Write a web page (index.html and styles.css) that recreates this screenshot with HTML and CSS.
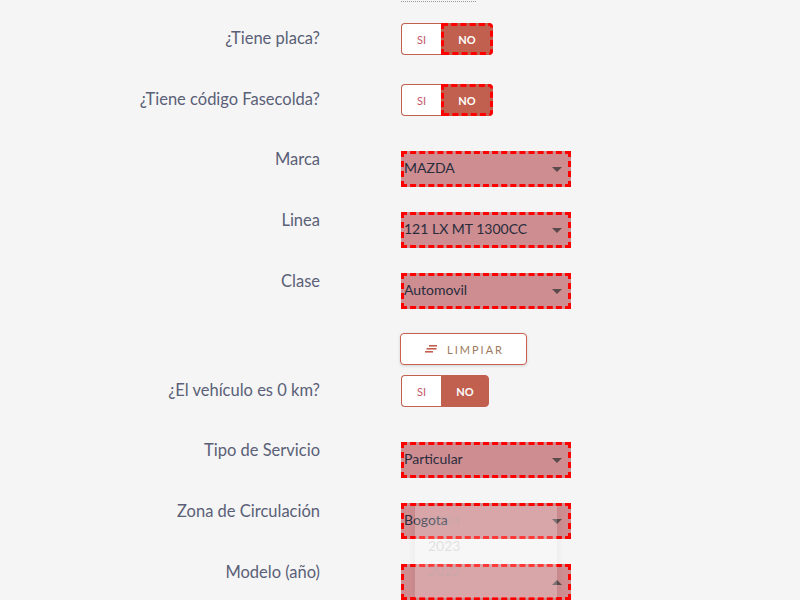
FILE: index.html
```html
<!DOCTYPE html>
<html lang="es">
<head>
<meta charset="utf-8">
<title>Formulario vehículo</title>
<link rel="stylesheet" href="styles.css">
</head>
<body>
<div class="form">
  <div class="row row-top">
    <div></div>
    <div class="dotted"></div>
  </div>

  <div class="row row-toggle">
    <label class="label">¿Tiene placa?</label>
    <div class="toggle">
      <span class="opt si">SI</span>
      <span class="opt no wide marked">NO</span>
    </div>
  </div>

  <div class="row row-toggle">
    <label class="label">¿Tiene código Fasecolda?</label>
    <div class="toggle">
      <span class="opt si">SI</span>
      <span class="opt no wide marked">NO</span>
    </div>
  </div>

  <div class="row">
    <label class="label">Marca</label>
    <div class="select"><span>MAZDA</span><i class="caret"></i></div>
  </div>

  <div class="row">
    <label class="label">Linea</label>
    <div class="select"><span>121 LX MT 1300CC</span><i class="caret"></i></div>
  </div>

  <div class="row">
    <label class="label">Clase</label>
    <div class="select"><span>Automovil</span><i class="caret"></i></div>
  </div>

  <div class="row row-btn">
    <div></div>
    <div>
      <button class="btn-clear" type="button">
        <svg class="clear-icon" width="13" height="8" viewBox="0 0 13 8">
          <rect x="4" y="0" width="8" height="1.6" fill="#c45f4e"/>
          <rect x="1.5" y="3" width="10" height="1.6" fill="#c45f4e"/>
          <rect x="0" y="6" width="8" height="1.6" fill="#c45f4e"/>
        </svg>
        <span>LIMPIAR</span>
      </button>
    </div>
  </div>

  <div class="row row-toggle">
    <label class="label">¿El vehículo es 0 km?</label>
    <div class="toggle">
      <span class="opt si">SI</span>
      <span class="opt no">NO</span>
    </div>
  </div>

  <div class="row">
    <label class="label">Tipo de Servicio</label>
    <div class="select"><span>Particular</span><i class="caret"></i></div>
  </div>

  <div class="row">
    <label class="label">Zona de Circulación</label>
    <div class="select"><span>Bogota</span><i class="caret"></i></div>
  </div>

  <div class="row">
    <label class="label">Modelo (año)</label>
    <div class="select"><span></span><i class="caret up"></i></div>
  </div>
</div>

<ul class="dropdown">
  <li>2024</li>
  <li>2023</li>
  <li>2022</li>
</ul>
</body>
</html>
```

FILE: styles.css
```css
html, body {
  margin: 0;
  padding: 0;
  background: #f5f5f5;
  height: 600px;
  overflow: hidden;
}

body {
  font-family: "Lato", "Open Sans", "Liberation Sans", sans-serif;
  position: relative;
}

.form {
  display: flex;
  flex-direction: column;
}

.row {
  display: grid;
  grid-template-columns: 320px 170px;
  column-gap: 81px;
  height: 61px;
  align-items: start;
}

.row-top {
  height: 20px;
}

.row-btn {
  height: 47px;
}

.dotted {
  width: 75px;
  margin-top: 1px;
  border-top: 1px dotted #9a9a9a;
}

.label {
  text-align: right;
  font-size: 16.5px;
  line-height: 24px;
  padding-top: 5px;
  color: #5a6077;
}

.row-toggle .label {
  padding-top: 6px;
}

.toggle {
  margin-top: 3px;
  display: flex;
  height: 32px;
  width: max-content;
}

.opt {
  box-sizing: border-box;
  height: 32px;
  display: flex;
  align-items: center;
  justify-content: center;
  font-size: 11px;
  border: 1px solid #c1604e;
}

.si {
  width: 40px;
  background: #ffffff;
  color: #c4566a;
  border-right: none;
  border-radius: 4px 0 0 4px;
}

.no {
  width: 48px;
  background: #c1604e;
  color: #ffffff;
  font-weight: 700;
  border-radius: 0 4px 4px 0;
}

.no.wide {
  width: 52px;
}

.marked {
  outline: 3px dashed #ff0000;
  outline-offset: -3px;
}

.select {
  margin-top: 9px;
  box-sizing: border-box;
  width: 170px;
  height: 36px;
  border: 3px dashed #ff0000;
  background: rgba(165, 37, 45, 0.5);
  display: flex;
  align-items: center;
  justify-content: space-between;
  padding: 0 6px 3px 0;
  font-size: 14px;
  color: #2a2c3c;
}

.caret {
  width: 0;
  height: 0;
  margin-top: 3px;
  border-left: 5px solid transparent;
  border-right: 5px solid transparent;
  border-top: 5px solid #5a4a4c;
}

.caret.up {
  border-top: none;
  border-bottom: 5px solid #5a4a4c;
}

.btn-clear {
  margin-top: 8px;
  margin-left: -1px;
  box-sizing: border-box;
  width: 127px;
  height: 32px;
  background: #ffffff;
  border: 1px solid #c9604f;
  border-radius: 4px;
  box-shadow: 0 1px 3px rgba(0, 0, 0, 0.15);
  display: flex;
  align-items: center;
  justify-content: center;
  gap: 9px;
  font-family: inherit;
  font-size: 11px;
  letter-spacing: 2px;
  color: #9c7a60;
  padding: 0 0 0 2px;
}

.dropdown {
  position: absolute;
  left: 415px;
  top: 506px;
  width: 142px;
  height: 90px;
  margin: 0;
  padding: 2px 0 0 0;
  list-style: none;
  background: rgba(255, 255, 255, 0.22);
  box-shadow: 0 2px 8px rgba(0, 0, 0, 0.06);
  z-index: 5;
}

.dropdown li {
  height: 25px;
  line-height: 25px;
  padding-left: 13px;
  font-size: 14px;
  color: rgba(170, 170, 170, 0.3);
}
```
